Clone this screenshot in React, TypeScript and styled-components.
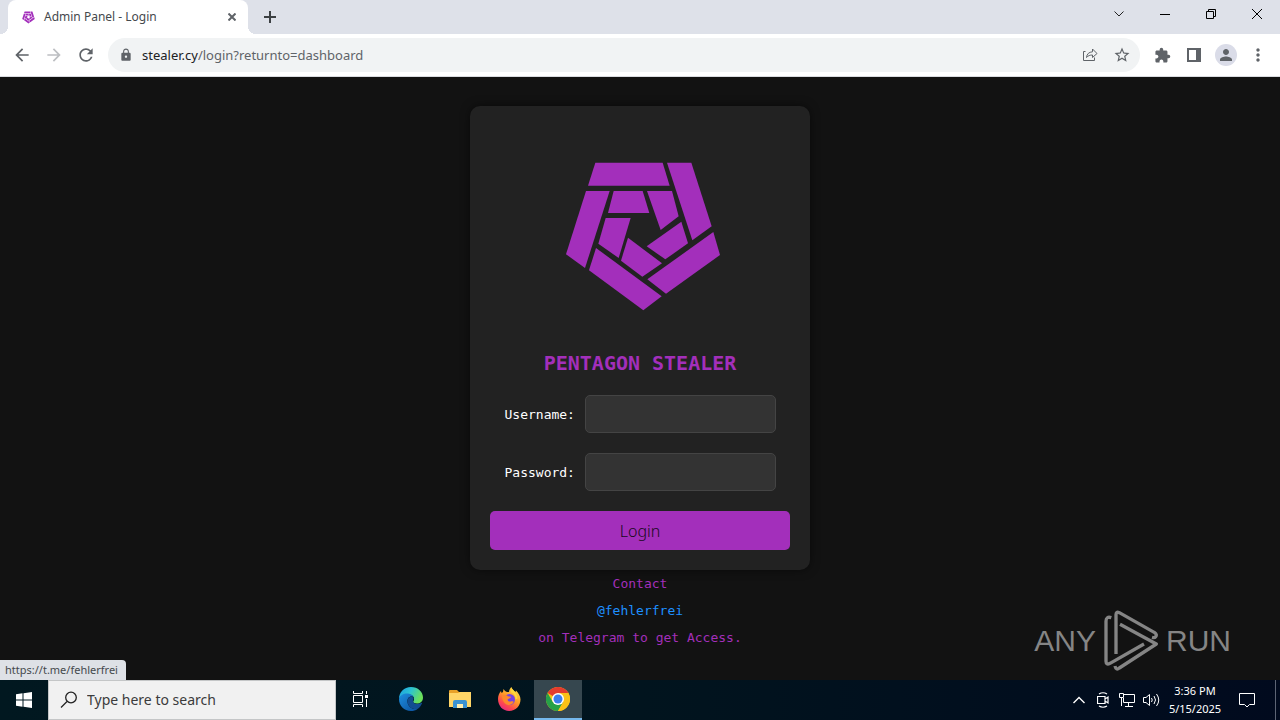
import React from 'react';
import styled, { createGlobalStyle } from 'styled-components';
import {
  MdArrowBack,
  MdArrowForward,
  MdRefresh,
  MdLock,
  MdStarBorder,
  MdExtension,
  MdPerson,
  MdMoreVert,
} from 'react-icons/md';

const sans = '"Noto Sans", "Open Sans", sans-serif';
const mono = '"DejaVu Sans Mono", "Liberation Mono", monospace';
const purple = '#a32fbb';

const GlobalStyle = createGlobalStyle`
  *, *::before, *::after { box-sizing: border-box; }
  html, body, #root { height: 100%; margin: 0; }
  body { background: #121212; overflow: hidden; font-family: ${sans}; }
  button, input { font: inherit; color: inherit; border: 0; padding: 0; margin: 0; background: none; }
  svg { display: block; flex: none; }
`;

const Desktop = styled.div`
  display: flex;
  flex-direction: column;
  min-height: 100vh;
`;

/* Browser chrome */
const TabStrip = styled.header`
  display: flex;
  align-items: stretch;
  height: 34px;
  padding-left: 8px;
  background: #dee1e9;
`;

const Tab = styled.div`
  position: relative;
  display: flex;
  align-items: center;
  width: 240px;
  padding: 0 9px 0 14px;
  border-radius: 8px 8px 0 0;
  background: #fff;
  color: #45494d;
  font-size: 12px;
  line-height: 16px;

  &::before, &::after {
    content: '';
    position: absolute;
    bottom: 0;
    width: 8px;
    height: 8px;
  }
  &::before { right: 100%; background: radial-gradient(circle at 0 0, #dee1e9 8px, #fff 8px); }
  &::after { left: 100%; background: radial-gradient(circle at 100% 0, #dee1e9 8px, #fff 8px); }
`;

const TabTitle = styled.span`
  flex: 1;
  margin-left: 9px;
  white-space: nowrap;
`;

const IconButton = styled.button<{ $w?: number; $color?: string }>`
  display: flex;
  flex: none;
  align-items: center;
  justify-content: center;
  width: ${(p) => p.$w ?? 32}px;
  color: ${(p) => p.$color ?? '#5f6368'};
`;

const WindowControls = styled.div`
  display: flex;
  margin-left: auto;
  height: 28px;
`;

const Toolbar = styled.nav`
  display: flex;
  align-items: stretch;
  height: 43px;
  padding: 4px 6px;
  background: #fff;
  border-bottom: 1px solid #dadce0;
`;

const AddressBar = styled.div`
  display: flex;
  flex: 1;
  align-items: center;
  height: 34px;
  margin: 0 6px;
  padding: 0 2px 0 11px;
  border-radius: 17px;
  background: #f1f3f4;
  color: #5f6368;
  font-size: 13px;
  line-height: 18px;
`;

const Host = styled.label`
  margin-left: 9px;
  color: #202124;
`;

const PathInput = styled.input`
  flex: 1;
  min-width: 0;
`;

const Avatar = styled.span`
  display: flex;
  align-items: center;
  justify-content: center;
  width: 22px;
  height: 22px;
  border-radius: 50%;
  background: #dadce8;
`;

/* Page */
const Page = styled.main`
  position: relative;
  display: flex;
  flex: 1;
  flex-direction: column;
  align-items: center;
  padding-top: 29px;
  background: #121212;
  font-family: ${mono};
  font-size: 13px;
`;

const Card = styled.form`
  display: flex;
  flex-direction: column;
  align-items: center;
  width: 340px;
  max-width: 100%;
  padding: 20px;
  border-radius: 10px;
  background: #222;
  box-shadow: 0 0 10px rgba(0, 0, 0, 0.5);
`;

const Title = styled.h1`
  margin: 0 0 15px;
  color: ${purple};
  font-size: 20px;
  line-height: 34px;
  white-space: nowrap;
`;

const Field = styled.div`
  display: flex;
  align-items: center;
  gap: 8px;
  margin-bottom: 20px;
  color: #fff;
`;

const FieldLabel = styled.label`
  width: 72px;
`;

const TextInput = styled.input`
  width: 191px;
  height: 38px;
  padding: 0 10px;
  border: 1px solid #444;
  border-radius: 5px;
  background: #333;
`;

const LoginButton = styled.button`
  align-self: stretch;
  height: 39px;
  border-radius: 5px;
  background: ${purple};
  color: #180a1c;
  font-family: ${sans};
  font-size: 16px;
  font-weight: 300;
`;

const Contact = styled.div`
  color: ${purple};
  line-height: 27px;
  text-align: center;
`;

const ContactLink = styled.a`
  display: block;
  color: #1e90ff;
  text-decoration: none;
`;

const StatusBubble = styled.div`
  position: absolute;
  bottom: 0;
  left: 0;
  padding: 0 8px 0 5px;
  border-top-right-radius: 4px;
  background: #dee1e6;
  color: #45494d;
  font-family: ${sans};
  font-size: 11px;
  line-height: 20px;
`;

const Watermark = styled.div`
  position: absolute;
  right: 49px;
  bottom: 8px;
  display: flex;
  align-items: center;
  gap: 8px;
  color: #858585;
  font-family: "Liberation Sans", sans-serif;
  font-size: 30px;
  line-height: 62px;
`;

/* Taskbar */
const Taskbar = styled.footer`
  display: flex;
  height: 40px;
  background: linear-gradient(90deg, #011820, #01141e 50%, #010a1e);
  color: #fff;
`;

const SearchBox = styled.label`
  display: flex;
  flex: none;
  align-items: center;
  width: 288px;
  padding-left: 11px;
  border: 1px solid #c4c6c7;
  background: #f1f1f1;
  color: #222;
`;

const SearchInput = styled.input`
  flex: 1;
  min-width: 0;
  margin-left: 9px;
  font-size: 14px;
  line-height: 20px;
  &::placeholder { color: #3b3b3b; opacity: 1; }
`;

const Apps = styled.div`
  display: flex;
  gap: 1px;
`;

const AppButton = styled(IconButton)<{ $active?: boolean }>`
  background: ${(p) => (p.$active ? '#36474f' : 'none')};
  border-bottom: 2px solid ${(p) => (p.$active ? '#76b9ed' : 'transparent')};
`;

const Tray = styled.div`
  display: flex;
  margin-left: auto;
`;

const Clock = styled.time`
  width: 64px;
  padding-top: 2px;
  font-size: 11px;
  line-height: 18px;
  text-align: center;
`;

const ShowDesktop = styled.button`
  width: 5px;
  margin-left: 8px;
  border-left: 1px solid #5d6474;
`;

const pentagonBars = [
  '136,38 338,38 359,107 114,107',
  '351,38 424,38 485,229 427,271',
  '108,123 179,123 105,354 48,313',
  '490,246 510,315 348,431 292,388',
  '138,294 335,439 280,481 117,361',
  '191,123 278,123 298,189 174,189',
  '291,123 366,123 386,199 332,240',
  '167,204 242,204 206,324 145,281',
  '394,215 414,280 346,328 290,289',
  '234,263 336,340 277,380 213,332',
];

const PentagonLogo = ({ size, viewBox }: { size: number; viewBox: string }) => (
  <svg width={size} height={size} viewBox={viewBox} fill={purple} aria-hidden="true">
    {pentagonBars.map((points) => (
      <polygon key={points} points={points} />
    ))}
  </svg>
);

type LineIconProps = { w?: number; h?: number; sw?: number; children: React.ReactNode };
const LineIcon = ({ w = 18, h = 18, sw = 1, children }: LineIconProps) => (
  <svg width={w} height={h} viewBox={`0 0 ${w} ${h}`} fill="none" stroke="currentColor" strokeWidth={sw} aria-hidden="true">
    {children}
  </svg>
);

const EdgeIcon = () => (
  <svg width="24" height="24" viewBox="0 0 24 24" aria-hidden="true">
    <defs>
      <linearGradient id="edgeTop" x1="0" y1="0" x2="1" y2="0.4">
        <stop offset="0" stopColor="#1b9de2" />
        <stop offset="0.5" stopColor="#2cc3d2" />
        <stop offset="1" stopColor="#6be05a" />
      </linearGradient>
      <linearGradient id="edgeBody" x1="0" y1="0" x2="1" y2="1">
        <stop offset="0" stopColor="#1d8fe0" />
        <stop offset="1" stopColor="#0c4f9c" />
      </linearGradient>
    </defs>
    <path d="M0 12C0 5 5 0 12 0s12 5 12 10.500c0 4-3 6-6 6-3.200 0-4.400-1.200-3.600-2.300C16 12 15 7.500 9 7.500 4 7.500 1 9.500 0 12z" fill="url(#edgeTop)" />
    <path d="M0 12c1-4 5-6 9-5.500 3 .3 5 1.700 5.600 3.600C11 8.500 8 11 8.500 15c.4 4.500 5 8 10 6.900C16.700 23.300 14.500 24 12 24 5 24 0 18.700 0 12z" fill="url(#edgeBody)" />
    <path d="M8.500 15c-.3-2.800 1-5 3.500-5.200 1.400-.1 2.600.6 2.700 2-.7 1.300-1.400 2.500-.2 3.700 2.300 2.200 6 1.600 8 .3.500-.3.800.1.500.6-1 2.200-2.600 4.300-4.500 5.500-5 1.100-9.500-2.400-10-6.900z" fill="#124d91" />
  </svg>
);

const ExplorerIcon = () => (
  <svg width="22" height="20" viewBox="0 0 22 20" aria-hidden="true">
    <path d="M0 2a1 1 0 0 1 1-1h7l2 2h11a1 1 0 0 1 1 1v3H0z" fill="#e8a128" />
    <path d="M0 4h9l2-1h11v15H0z" fill="#ffd567" />
    <path d="M4 19v-6a2 2 0 0 1 2-2h10a2 2 0 0 1 2 2v6h-4v-4H8v4z" fill="#3a92d3" />
    <path d="M8 15h6v4H8z" fill="#ffeeb0" />
  </svg>
);

const FirefoxIcon = () => (
  <svg width="24" height="24" viewBox="0 0 24 24" aria-hidden="true">
    <defs>
      <linearGradient id="fox" x1="0.8" y1="0" x2="0.2" y2="1">
        <stop offset="0" stopColor="#ffe14a" />
        <stop offset="0.45" stopColor="#ff9a28" />
        <stop offset="0.75" stopColor="#ff4650" />
        <stop offset="1" stopColor="#e0268a" />
      </linearGradient>
    </defs>
    <path d="M1 12c0-3 1-6 3-8l.5 2L6 5l.5-3c1 1.500 2 2.500 3.500 3h2c.2-2 1-4 2.500-5 .5 2.500 2.500 3.500 4 5l.5-1.500C21.500 6 23.500 9 23.500 12.500 23.500 19 18.500 24 12.200 24S1 19 1 12z" fill="url(#fox)" />
    <circle cx="12.500" cy="12.500" r="5.500" fill="#7542e5" />
    <path d="M5 9c2-1.500 4.500-1 6 .3l3 .5c-.3 1.500-1.700 1.700-3 2.200-1 1 .5 3 2.500 2.500 2.500-.6 3.500 0 3 .8-1.200 2-3 3-5.200 2.700C7.500 17.500 5 13 5 9z" fill="#ff8a2b" />
    <path d="M14 5c3 1.500 4.700 4 4.500 7.500l2-1C20.500 8 18 4.500 14.500 1z" fill="#ffd83d" />
  </svg>
);

const ChromeIcon = () => (
  <svg width="24" height="24" viewBox="0 0 24 24" aria-hidden="true">
    <circle cx="12" cy="12" r="12" fill="#fbc116" />
    <path d="M12 12 1.600 6A12 12 0 0 1 22.400 6z" fill="#e33b2e" />
    <path d="M1.600 6A12 12 0 0 0 12 24l5.200-9L12 12 6.800 15z" fill="#26a148" />
    <path d="M12 6h10.400A12 12 0 0 1 12 24l5.200-9z" fill="#fbc116" />
    <circle cx="12" cy="12" r="6" fill="#fff" />
    <circle cx="12" cy="12" r="4.500" fill="#3b7ded" />
  </svg>
);

const AnyRunMark = () => (
  <svg
    width="54"
    height="62"
    viewBox="0 0 162 186"
    fill="none"
    stroke="currentColor"
    strokeWidth="10"
    strokeLinejoin="round"
    aria-hidden="true"
  >
    <path d="M22 23Q6 18 6 34V154Q6 166 18 160L120 102" />
    <path d="M36 132V14Q36 3 46 8L152 68Q160 74 155 80Q152 84 144 82" />
    <path d="M48 43L157 102 46 174Q36 182 33 168" />
  </svg>
);

export default function App() {
  return (
    <Desktop>
      <GlobalStyle />
      <TabStrip>
        <Tab>
          <PentagonLogo size={13} viewBox="40 20 480 480" />
          <TabTitle>Admin Panel - Login</TabTitle>
          <IconButton $w={14} aria-label="Close tab">
            <LineIcon w={8} h={8} sw={2}>
              <path d="M0.500 0.500l7 7M7.500 0.500l-7 7" />
            </LineIcon>
          </IconButton>
        </Tab>
        <IconButton $w={44} $color="#3c4043" aria-label="New tab">
          <LineIcon w={12} h={12} sw={2}>
            <path d="M6 0v12M0 6h12" />
          </LineIcon>
        </IconButton>
        <WindowControls>
          <IconButton $w={46} $color="#222" aria-label="Search tabs">
            <LineIcon w={10} h={6}>
              <path d="M0.500 0.500 5 5l4.500-4.500" />
            </LineIcon>
          </IconButton>
          <IconButton $w={46} $color="#000" aria-label="Minimize">
            <LineIcon w={10} h={1}>
              <path d="M0 .5h10" />
            </LineIcon>
          </IconButton>
          <IconButton $w={46} $color="#000" aria-label="Restore">
            <LineIcon w={10} h={10}>
              <path d="M.5 2.500h7v7h-7zM2.500 2.500v-2h7v7h-2" />
            </LineIcon>
          </IconButton>
          <IconButton $w={46} $color="#000" aria-label="Close">
            <LineIcon w={10} h={10}>
              <path d="M0 0l10 10M10 0 0 10" />
            </LineIcon>
          </IconButton>
        </WindowControls>
      </TabStrip>

      <Toolbar>
        <IconButton aria-label="Back"><MdArrowBack size={20} /></IconButton>
        <IconButton $color="#bdbfc2" aria-label="Forward"><MdArrowForward size={20} /></IconButton>
        <IconButton aria-label="Reload"><MdRefresh size={20} /></IconButton>
        <AddressBar>
          <MdLock size={14} />
          <Host htmlFor="address">stealer.cy</Host>
          <PathInput id="address" defaultValue="/login?returnto=dashboard" />
          <IconButton aria-label="Share">
            <LineIcon w={16} h={16}>
              <path d="M3.500 4.500h-2v9h11v-3" />
              <path d="M4.500 10.500c.3-3.500 2.500-5.500 6-5.700V2l4.500 4.500-4.500 4V8c-2.500 0-4.500.7-6 2.500z" strokeLinejoin="round" />
            </LineIcon>
          </IconButton>
          <IconButton aria-label="Bookmark"><MdStarBorder size={18} /></IconButton>
        </AddressBar>
        <IconButton aria-label="Extensions"><MdExtension size={17} /></IconButton>
        <IconButton aria-label="Side panel">
          <LineIcon w={14} h={14} sw={2}>
            <path d="M1 1h12v12H1z" />
            <path d="M9 1h4v12H9z" fill="currentColor" stroke="none" />
          </LineIcon>
        </IconButton>
        <IconButton aria-label="Profile">
          <Avatar><MdPerson size={18} /></Avatar>
        </IconButton>
        <IconButton aria-label="Menu"><MdMoreVert size={20} /></IconButton>
      </Toolbar>

      <Page>
        <Card onSubmit={(e: React.FormEvent) => e.preventDefault()}>
          <PentagonLogo size={220} viewBox="-60 -72 660 660" />
          <Title>PENTAGON STEALER</Title>
          <Field>
            <FieldLabel htmlFor="username">Username:</FieldLabel>
            <TextInput id="username" type="text" />
          </Field>
          <Field>
            <FieldLabel htmlFor="password">Password:</FieldLabel>
            <TextInput id="password" type="password" />
          </Field>
          <LoginButton type="submit">Login</LoginButton>
        </Card>
        <Contact>
          Contact
          <ContactLink href="#">@fehlerfrei</ContactLink>
          on Telegram to get Access.
        </Contact>
        <StatusBubble>https://t.me/fehlerfrei</StatusBubble>
        <Watermark>
          <span>ANY</span>
          <AnyRunMark />
          <span>RUN</span>
        </Watermark>
      </Page>

      <Taskbar>
        <IconButton $w={48} $color="#fff" aria-label="Start">
          <svg width="16" height="16" viewBox="0 0 16 16" fill="currentColor" aria-hidden="true">
            <path d="M0 2.200 6.500 1.300V7.500H0zM7.500 1.200 16 0v7.500H7.500zM0 8.500h6.500v6.200L0 13.800zM7.500 8.500H16V16l-8.500-1.200z" />
          </svg>
        </IconButton>
        <SearchBox>
          <LineIcon w={18} h={18} sw={1.3}>
            <circle cx="11" cy="6.500" r="5.300" />
            <path d="M7 10.500 1 16.500" />
          </LineIcon>
          <SearchInput type="text" aria-label="Search" placeholder="Type here to search" />
        </SearchBox>
        <Apps>
          <AppButton $w={50} $color="#fff" aria-label="Task view">
            <LineIcon w={18} h={16}>
              <path d="M1.500 0v2.500h9V0M1.500 4.500h9v7h-9zM1.500 16v-2.500h9V16M14.500 0v3M14.500 8v8" />
              <path d="M13 4h3v3h-3z" fill="currentColor" stroke="none" />
            </LineIcon>
          </AppButton>
          <AppButton $w={48} aria-label="Edge"><EdgeIcon /></AppButton>
          <AppButton $w={48} aria-label="File Explorer"><ExplorerIcon /></AppButton>
          <AppButton $w={48} aria-label="Firefox"><FirefoxIcon /></AppButton>
          <AppButton $w={48} $active aria-label="Chrome"><ChromeIcon /></AppButton>
        </Apps>
        <Tray>
          <IconButton $w={24} $color="#fff" aria-label="Hidden icons">
            <LineIcon w={12} h={8} sw={1.4}>
              <path d="M.5 7 6 1.500 11.500 7" />
            </LineIcon>
          </IconButton>
          <IconButton $w={24} $color="#fff" aria-label="Meet now">
            <LineIcon w={12} h={16} sw={1.2}>
              <path d="M.5 4.500h7.500v7H.5zM8 7l3-2v6L8 9M2 2q4-2.500 8 0M2 14q4 2.500 8 0" />
            </LineIcon>
          </IconButton>
          <IconButton $w={24} $color="#fff" aria-label="Network">
            <LineIcon w={16} h={14}>
              <path d="M5 1.500h10.500v8H4.500V5M9.500 9.500v4M6 13.500h8M.5.500h4v4h-4zM2.500 4.500V13" />
            </LineIcon>
          </IconButton>
          <IconButton $w={24} $color="#fff" aria-label="Volume">
            <LineIcon w={17} h={14}>
              <path d="M.5 4.500H3L6.500 1.500v11L3 9.500H.5zM8.500 5q1.500 2 0 4M11 3q3 4 0 8M13.500 1q4.500 6 0 12" />
            </LineIcon>
          </IconButton>
          <Clock>
            3:36 PM
            <br />
            5/15/2025
          </Clock>
          <IconButton $w={40} $color="#fff" aria-label="Notifications">
            <LineIcon w={16} h={16}>
              <path d="M.5 1.500h15v11h-5L8 15l-2.500-2.500h-5z" />
            </LineIcon>
          </IconButton>
          <ShowDesktop aria-label="Show desktop" />
        </Tray>
      </Taskbar>
    </Desktop>
  );
}
